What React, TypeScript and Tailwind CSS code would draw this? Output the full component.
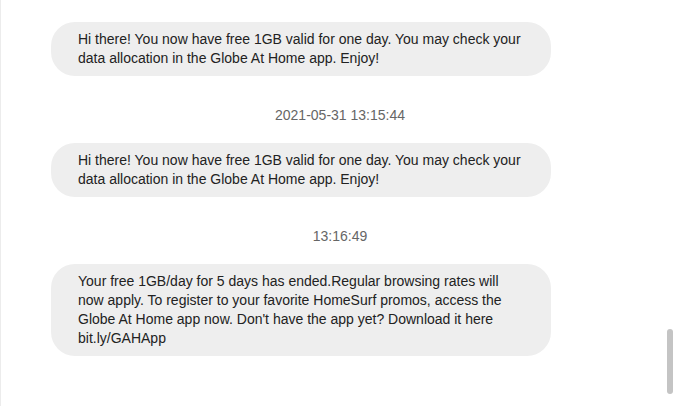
import React from "react";

const Bubble = ({ children }: { children: React.ReactNode }) => (
  <div className="ml-[50px] w-[500px] rounded-[24px] bg-[#eeeeee] px-[27px] py-[8px] text-[14px] leading-[19px] text-[#222222]">
    {children}
  </div>
);

const Stamp = ({ children }: { children: React.ReactNode }) => (
  <div className="mt-[30px] mb-[18px] text-center text-[14px] leading-[19px] text-[#666666]">
    {children}
  </div>
);

export default function App() {
  return (
    <div
      className="relative h-[406px] w-[679px] overflow-hidden border-l border-[#ececec] bg-white pt-[22px]"
      style={{ fontFamily: '"Liberation Sans", Arial, sans-serif' }}
    >
      <div className="flex flex-col">
        <Bubble>
          Hi there! You now have free 1GB valid for one day. You may check your data allocation in the Globe At Home app. Enjoy!
        </Bubble>
        <Stamp>2021-05-31 13:15:44</Stamp>
        <Bubble>
          Hi there! You now have free 1GB valid for one day. You may check your data allocation in the Globe At Home app. Enjoy!
        </Bubble>
        <Stamp>13:16:49</Stamp>
        <Bubble>
          Your free 1GB/day for 5 days has ended.Regular browsing rates will now apply. To register to your favorite HomeSurf promos, access the Globe At Home app now. Don't have the app yet? Download it here bit.ly/GAHApp
        </Bubble>
      </div>
      <div className="absolute left-[666px] top-[329px] h-[65px] w-[6px] rounded-full bg-[#c4c4c4]" />
    </div>
  );
}
